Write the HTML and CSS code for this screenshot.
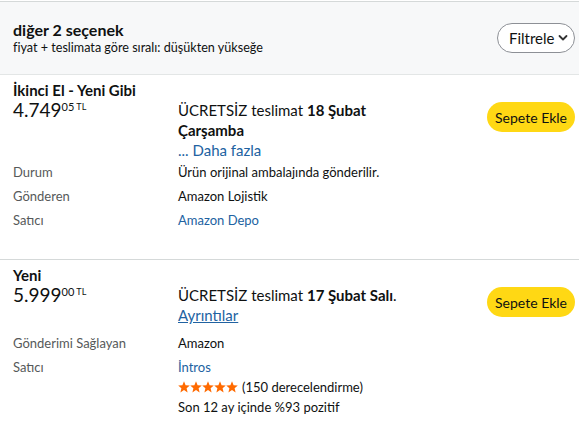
FILE: index.html
```html
<!DOCTYPE html>
<html lang="tr">
<head>
<meta charset="utf-8">
<link rel="stylesheet" href="styles.css">
</head>
<body>
<div class="page">
  <header class="head">
    <div class="head-text">
      <div class="head-title">diğer 2 seçenek</div>
      <div class="head-sub">fiyat + teslimata göre sıralı: düşükten yükseğe</div>
    </div>
    <button class="filter">Filtrele <svg class="chev" width="10" height="8" viewBox="0 0 10 8"><path d="M1.5 2 L5 5.5 L8.5 2" fill="none" stroke="#333" stroke-width="1.8" stroke-linecap="round" stroke-linejoin="round"/></svg></button>
  </header>

  <section class="offer offer-1">
    <div class="cond">İkinci El - Yeni Gibi</div>
    <div class="price">4.749<sup class="frac">05</sup><sup class="cur">TL</sup></div>
    <div class="deliv">ÜCRETSİZ teslimat <b>18 Şubat</b><br><b>Çarşamba</b><br><a class="link">... Daha fazla</a></div>
    <div class="btn-cell"><button class="cart">Sepete Ekle</button></div>

    <div class="label">Durum</div>
    <div class="value">Ürün orijinal ambalajında gönderilir.</div>
    <div class="label">Gönderen</div>
    <div class="value">Amazon Lojistik</div>
    <div class="label">Satıcı</div>
    <div class="value"><a class="link">Amazon Depo</a></div>
  </section>

  <section class="offer offer-2">
    <div class="cond">Yeni</div>
    <div class="price">5.999<sup class="frac">00</sup><sup class="cur">TL</sup></div>
    <div class="deliv deliv-short">ÜCRETSİZ teslimat <b>17 Şubat Salı</b>.<br><a class="link ul">Ayrıntılar</a></div>
    <div class="btn-cell"><button class="cart">Sepete Ekle</button></div>

    <div class="label">Gönderimi Sağlayan</div>
    <div class="value">Amazon</div>
    <div class="label">Satıcı</div>
    <div class="value">
      <a class="link">İntros</a>
      <div class="rating"><span class="stars"><svg width="60" height="12" viewBox="0 0 60 12"><g fill="#ff6a00"><path id="s" d="M6 0.3 L7.6 4.2 L11.8 4.5 L8.6 7.2 L9.6 11.4 L6 9.1 L2.4 11.4 L3.4 7.2 L0.2 4.5 L4.4 4.2 Z"/><use href="#s" x="12"/><use href="#s" x="24"/><use href="#s" x="36"/><use href="#s" x="48"/></g></svg></span> (150 derecelendirme)</div>
      <div class="pos">Son 12 ay içinde %93 pozitif</div>
    </div>
  </section>
</div>
</body>
</html>
```

FILE: styles.css
```css
* { box-sizing: border-box; }
html, body { margin: 0; padding: 0; background: #fff; }
body {
  font-family: Lato, "Liberation Sans", Arial, sans-serif;
  color: #0f1111;
}
.page { padding-top: 1px; }
.head {
  display: flex;
  align-items: center;
  justify-content: space-between;
  background: #f7f8f9;
  border-top: 1px solid #d5d9d9;
  border-bottom: 1px solid #e3e6e6;
  height: 74px;
  padding: 0 4px 0 13px;
}
.head-title { font-size: 16px; font-weight: 700; line-height: 20px; }
.head-sub { font-size: 12.6px; line-height: 16px; }
.filter {
  font-family: inherit;
  display: flex;
  align-items: center;
  gap: 3px;
  height: 30px;
  width: 78px;
  padding: 0 0 0 11px;
  border: 1px solid #8d9096;
  border-radius: 15px;
  background: #fff;
  color: #0f1111;
  font-size: 15px;
}
.offer {
  display: grid;
  grid-template-columns: 165px 1fr auto;
  align-items: start;
  padding: 7px 4px 29px 13px;
  border-bottom: 1px solid #d5d9d9;
}
.offer-2 { border-bottom: 0; }
.cond { grid-column: 1 / 4; font-size: 15px; font-weight: 700; line-height: 16px; }
.price, .deliv, .btn-cell { margin-top: 2px; }
.price { font-size: 19px; line-height: 20px; white-space: nowrap; }
.price sup { vertical-align: top; line-height: 11px; position: relative; top: 1px; }
.frac { font-size: 11px; }
.cur { font-size: 9px; margin-left: 2px; }
.deliv { font-size: 15px; line-height: 20px; max-width: 230px; margin-bottom: -2px; }
.deliv-short { margin-bottom: 4px; }
.btn-cell { display: flex; }
.cart {
  font-family: inherit;
  background: #ffd814;
  border: 0;
  border-radius: 15px;
  height: 30px;
  padding: 0 8px;
  font-size: 14px;
  color: #0f1111;
  margin-top: 2px;
}
.label, .value { font-size: 13px; line-height: 20px; margin-top: 4px; }
.label { color: #565959; }
.value { grid-column: 2 / 4; }
.link { color: #2162a1; }
.ul { text-decoration: underline; }
.rating, .pos { line-height: 20px; }
.rating { display: flex; align-items: center; gap: 4px; }
.stars { display: inline-flex; }
```
